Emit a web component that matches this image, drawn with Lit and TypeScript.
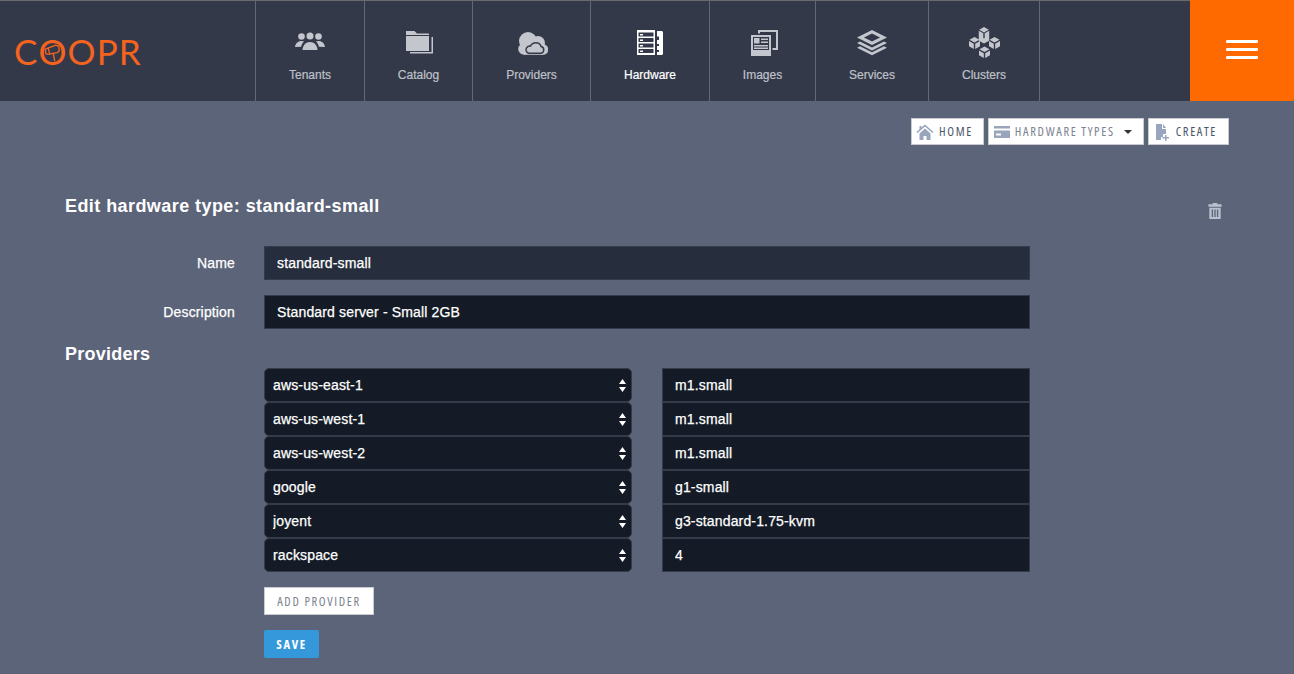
import { LitElement, html, css, svg } from "lit";
import { customElement } from "lit/decorators.js";

const navIcons: Record<string, unknown> = {
  tenants: svg`
    <circle cx="7.500" cy="9.500" r="3.300"/><circle cx="16" cy="9" r="3.500"/><circle cx="24.500" cy="9.500" r="3.300"/>
    <path d="M1 20c.6-3.600 2.800-6 6.500-6 1 0 1.800.2 2.600.5-1.500 1.300-2.500 3-3 5.200z"/>
    <path d="M31 20c-.6-3.600-2.800-6-6.500-6-1 0-1.800.2-2.600.5 1.500 1.300 2.500 3 3 5.200z"/>
    <path d="M8.500 23c.3-4.600 3.200-8 7.500-8s7.200 3.400 7.500 8z"/>`,
  catalog: svg`
    <path d="M3 4h8.500l2.500 2.500h12V8H3z"/>
    <path d="M3 9h23v15H3z"/>
    <path d="M28.500 10H30v16.500H7V25h21.500z"/>`,
  providers: svg`
    <circle cx="12" cy="14" r="9"/><circle cx="22" cy="16" r="7"/><circle cx="8" cy="22" r="5.800"/><circle cx="27" cy="22.500" r="5.300"/>
    <path d="M8 20h19v7.800H8z"/>
    <path d="M13 26.300h11.500a3.400 3.400 0 0 0 .6-6.700c-.8-2.500-2.900-3.800-5.300-3.800-2.300 0-4.300 1.300-5.300 3.300a3.600 3.600 0 0 0-1.500 7.200z" fill="none" stroke="#343949" stroke-width="1.500"/>`,
  hardware: svg`
    <path fill-rule="evenodd" d="M3 3h18v25H3zM4.500 5.500v4h15v-4zM4.500 11v4h15v-4zM4.500 16.500v4h15v-4zM4.500 22v4h15v-4z"/>
    <path d="M6 7h3v1.500H6zM6 12.500h3V14H6zM6 18h3v1.500H6zM6 23.500h3V25H6z"/>
    <path d="M23 4h5l1 1v22l-1 1h-5v-3h2v-2h-2v-4h2v-2h-2v-4h2V9.500h-2z"/>`,
  images: svg`
    <path fill-rule="evenodd" d="M4 8h20v21H4zM6 10v13h16V10z"/>
    <path d="M7 11h5.500v5.500H7zM14 11.500h7V13h-7zM14 14.500h7V16h-7zM7 18h14v1.500H7zM7 20.500h14V22H7z"/>
    <path d="M11 3h20v20h-5.500v-2H29V5H13v1.500h-2z"/>`,
  services: svg`
    <path d="M16 3l15 7.500L16 18 1 10.500zM16 6.500L8 10.500l8 4 8-4z" fill-rule="evenodd"/>
    <path d="M4 14.500L16 20.500l12-6 3 1.500-15 7.500L1 16z"/>
    <path d="M4 20L16 26l12-6 3 1.500L16 29 1 21.500z" transform="translate(0 -.8)"/>`,
  clusters: svg`
    <path d="M16 0l4.800 2.700L16 5.400l-4.800-2.700zM10.800 3.800l4.500 2.500v5h1.400v-5l4.500-2.500v10L16 16.500l-5.200-2.700z"/>
    <path d="M6.500 10l5 2.800-5 2.800-5-2.800zM1 14l4.800 2.700V22L1 19.300zM12 14v5.300L7.200 22v-5.300z"/>
    <path d="M26.500 10l5 2.800-5 2.800-5-2.800zM21 14l4.800 2.700V22L21 19.300zM32 14v5.300L27.200 22v-5.300z"/>
    <path d="M16.500 19.500l5 2.800-5 2.800-5-2.800zM11 23.500l4.800 2.700V31L11 28.300zM22 23.500v4.800L17.200 31v-4.800z"/>`,
};

@customElement("app-root")
export class AppRoot extends LitElement {
  static styles = css`
    :host {
      display: block;
      min-height: 674px;
      background: #5c6479;
      font-family: "Liberation Sans", Arial, sans-serif;
      color: #fff;
      overflow: hidden;
    }
    .topbar {
      display: flex;
      height: 100px;
      background: #343949;
      border-top: 1px solid #6b6b6b;
    }
    .brand {
      width: 255px;
      display: flex;
      align-items: center;
      padding-left: 14px;
      box-sizing: border-box;
      color: #f4641f;
      font-family: Lato, sans-serif;
      font-weight: 400;
      font-size: 35px;
      letter-spacing: 1.1px;
      line-height: 1;
    }
    .brand-o {
      position: relative;
      display: inline-block;
    }
    .brand-o svg {
      position: absolute;
      left: 6px;
      top: 10px;
      width: 16px;
      height: 18px;
    }
    .nav {
      display: flex;
      flex: 1;
    }
    .nav-item {
      display: flex;
      flex-direction: column;
      align-items: center;
      box-sizing: border-box;
      border-left: 1px solid #62687a;
      padding-top: 26px;
      font-size: 12px;
      line-height: 14px;
      color: #bfc1c8;
      fill: #c4c6cd;
      -webkit-text-stroke: 0.2px;
    }
    .nav-item:last-child {
      border-right: 1px solid #62687a;
    }
    .nav-item.active {
      color: #fff;
      fill: #fff;
    }
    .nav-item svg {
      width: 32px;
      height: 32px;
      margin-bottom: 9px;
    }
    .menu-btn {
      width: 104px;
      margin-top: -1px;
      padding-bottom: 2px;
      background: #ff6a00;
      display: flex;
      flex-direction: column;
      justify-content: center;
      align-items: center;
      gap: 5px;
    }
    .menu-btn span {
      width: 32px;
      height: 3px;
      border-radius: 1px;
      background: #fff;
    }
    .actions {
      display: flex;
      justify-content: flex-end;
      gap: 4px;
      padding: 17px 65px 0 0;
    }
    .tool {
      display: flex;
      align-items: center;
      box-sizing: border-box;
      height: 27px;
      background: #fff;
      border: 1px solid #c9cbd1;
      font-family: "Open Sans", sans-serif;
      font-stretch: 75%;
      font-weight: 500;
      font-size: 12.5px;
      letter-spacing: 1.65px;
      color: #4c5568;
      fill: #98a5bd;
      padding: 0 11px 0 4px;
    }
    .tool.home {
      padding-right: 10px;
    }
    .tool.muted {
      color: #7c8290;
      padding-right: 11px;
    }
    .tool svg {
      width: 18px;
      height: 18px;
      margin-right: 5px;
    }
    .tool.muted svg {
      margin-right: 4px;
    }
    .caret {
      width: 0;
      height: 0;
      border-left: 4px solid transparent;
      border-right: 4px solid transparent;
      border-top: 4px solid #333;
      margin-left: 9px;
    }
    main {
      padding: 51px 65px 0;
    }
    .title-row {
      display: flex;
      justify-content: space-between;
    }
    h1,
    h2 {
      margin: 0;
      font-size: 18px;
      line-height: 20px;
      font-weight: bold;
    }
    h1 {
      letter-spacing: 0.43px;
    }
    h2 {
      margin-top: 15px;
      letter-spacing: 0.25px;
    }
    .trash {
      width: 16px;
      height: 17px;
      margin: 6px 6px 0 0;
      fill: #b9c0ce;
    }
    .field {
      display: grid;
      grid-template-columns: 170px 766px;
      column-gap: 29px;
      align-items: center;
      font-size: 14px;
      letter-spacing: 0.15px;
      -webkit-text-stroke: 0.25px;
      margin-top: 15px;
    }
    .title-row + .field {
      margin-top: 27px;
    }
    .field label {
      text-align: right;
    }
    input,
    select {
      box-sizing: border-box;
      width: 100%;
      height: 34px;
      margin: 0;
      background: #141b26;
      color: #fff;
      font: 14px "Liberation Sans", Arial, sans-serif;
      letter-spacing: 0.15px;
      -webkit-text-stroke: 0.25px;
      outline: none;
    }
    .field input {
      border: 1px solid #343b4b;
      padding: 0 12px;
    }
    .field input.focused {
      background: #262e3d;
    }
    .providers {
      display: grid;
      grid-template-columns: 368px 368px;
      column-gap: 30px;
      margin: 4px 0 0 199px;
      width: 766px;
    }
    .pick {
      position: relative;
    }
    select {
      appearance: none;
      display: block;
      border: 1px solid #343b4b;
      border-radius: 5px;
      padding: 0 8px;
    }
    .pick svg {
      position: absolute;
      right: 6px;
      top: 11px;
      width: 7px;
      height: 13px;
      fill: #fff;
    }
    .providers input {
      border: 1px solid #343b4b;
      padding: 0 12px;
    }
    .add,
    .save {
      display: block;
      box-sizing: border-box;
      margin: 0 0 0 199px;
      padding: 0;
      height: 28px;
      font-family: "Open Sans", sans-serif;
      font-stretch: 75%;
      font-weight: 500;
      font-size: 12.5px;
      letter-spacing: 1.65px;
    }
    .add {
      margin-top: 15px;
      width: 110px;
      background: #fff;
      border: 1px solid #c9cbd1;
      color: #7c8290;
    }
    .save {
      margin-top: 15px;
      width: 55px;
      background: #3498db;
      border: none;
      border-radius: 2px;
      color: #fff;
      font-weight: bold;
    }
  `;

  navItems = [
    { id: "tenants", label: "Tenants", width: 109 },
    { id: "catalog", label: "Catalog", width: 108 },
    { id: "providers", label: "Providers", width: 118 },
    { id: "hardware", label: "Hardware", width: 119, active: true },
    { id: "images", label: "Images", width: 106 },
    { id: "services", label: "Services", width: 113 },
    { id: "clusters", label: "Clusters", width: 112 },
  ];

  rows = [
    ["aws-us-east-1", "m1.small"],
    ["aws-us-west-1", "m1.small"],
    ["aws-us-west-2", "m1.small"],
    ["google", "g1-small"],
    ["joyent", "g3-standard-1.75-kvm"],
    ["rackspace", "4"],
  ];

  render() {
    return html`
      <header class="topbar">
        <div class="brand">
          C<span class="brand-o">O<svg viewBox="0 0 14 16">
            <g fill="none" stroke="#f4641f" stroke-width="1.200" stroke-linejoin="round">
              <path d="M1 4.500l9.500-3.500 2.500 1 .5 4-2 1.700-8 1.500-2-.7z"/>
              <path d="M3.500 3.500L5 8.800"/>
              <path d="M8 8l1.500 7.500"/>
            </g>
          </svg></span>OPR
        </div>
        <nav class="nav">
          ${this.navItems.map(
            (item) => html`
              <div class="nav-item ${item.active ? "active" : ""}" style="width:${item.width}px">
                <svg viewBox="0 0 32 32">${navIcons[item.id]}</svg>
                ${item.label}
              </div>
            `
          )}
        </nav>
        <div class="menu-btn"><span></span><span></span><span></span></div>
      </header>

      <div class="actions">
        <div class="tool home">
          <svg viewBox="0 0 18 18"><path d="M9 1.500L17.500 9l-1 1L9 3.500 1.500 10l-1-1 3-2.700V3h2v1.600zM3.500 10.500L9 5.500l5.500 5V17h-4v-4h-3v4h-4z"/></svg>HOME
        </div>
        <div class="tool muted">
          <svg viewBox="0 0 18 18"><path fill-rule="evenodd" d="M1 3h16v12H1zM1 5.500v2h16v-2zM3 10.500v2h5v-2z"/></svg>HARDWARE TYPES<span class="caret"></span>
        </div>
        <div class="tool">
          <svg viewBox="0 0 18 18"><path d="M3 1h6v5h4v5h-3v3H8v3H3zM10 1l3 4h-3zM12 12h1.500v2H16v1.500h-2.500V18H12v-2.500H9.500V14H12z"/></svg>CREATE
        </div>
      </div>

      <main>
        <div class="title-row">
          <h1>Edit hardware type: standard-small</h1>
          <svg class="trash" viewBox="0 0 16 18"><path fill-rule="evenodd" d="M5.500 1h5v1.500H15V5H1V2.500h4.500zM2 6h12v12H2zM4.500 8v8H6V8zM7.300 8v8h1.400V8zM10 8v8h1.500V8z"/></svg>
        </div>
        <div class="field">
          <label>Name</label>
          <input class="focused" .value=${"standard-small"} />
        </div>
        <div class="field">
          <label>Description</label>
          <input .value=${"Standard server - Small 2GB"} />
        </div>
        <h2>Providers</h2>
        <div class="providers">
          ${this.rows.map(
            ([provider, flavor]) => html`
              <div class="pick">
                <select><option>${provider}</option></select>
                <svg viewBox="0 0 7 13"><path d="M3.500 0L7 5H0zM0 8h7l-3.500 5z"/></svg>
              </div>
              <input .value=${flavor} />
            `
          )}
        </div>
        <button class="add">ADD PROVIDER</button>
        <button class="save">SAVE</button>
      </main>
    `;
  }
}
